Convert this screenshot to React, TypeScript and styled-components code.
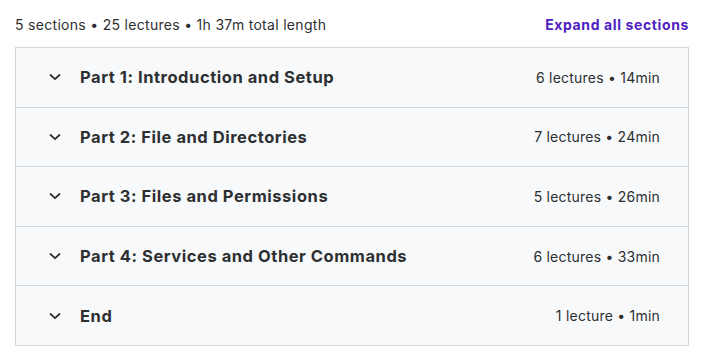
import React from "react";
import styled, { createGlobalStyle } from "styled-components";

const Global = createGlobalStyle`
  html, body { margin: 0; padding: 0; background: #ffffff; }
  body { font-family: Inter, "Noto Sans", sans-serif; color: #2d2f31; }
`;

const Page = styled.div`
  padding: 0 15px;
`;

const Header = styled.div`
  display: flex;
  align-items: center;
  justify-content: space-between;
  height: 47px;
  padding-top: 1px;
  box-sizing: border-box;
`;

const Summary = styled.span`
  font-size: 14px;
  letter-spacing: 0.3px;
  color: #2d2f31;
`;

const ExpandLink = styled.button`
  border: none;
  background: none;
  padding: 0;
  font-family: inherit;
  font-size: 14px;
  font-weight: 700;
  letter-spacing: 0.62px;
  color: #5022c3;
  cursor: pointer;
`;

const Accordion = styled.div`
  border: 1px solid #d1d7dc;
  background: #f7f9fa;
`;

const Row = styled.div`
  display: flex;
  align-items: center;
  height: 58.6px;
  padding: 0 28px 0 33px;
  & + & {
    border-top: 1px solid #d1d7dc;
  }
`;

const Chevron = styled.svg`
  width: 12px;
  height: 12px;
  flex: none;
  margin-right: 19px;
`;

const Title = styled.span`
  flex: 1;
  font-size: 16.5px;
  font-weight: 700;
  letter-spacing: 0.55px;
  color: #2d2f31;
`;

const Meta = styled.span`
  font-size: 14px;
  letter-spacing: 0.22px;
  color: #2d2f31;
`;

const sections = [
  { title: "Part 1: Introduction and Setup", meta: "6 lectures • 14min" },
  { title: "Part 2: File and Directories", meta: "7 lectures • 24min" },
  { title: "Part 3: Files and Permissions", meta: "5 lectures • 26min" },
  { title: "Part 4: Services and Other Commands", meta: "6 lectures • 33min" },
  { title: "End", meta: "1 lecture • 1min" },
];

export default function App() {
  return (
    <>
      <Global />
      <Page>
        <Header>
          <Summary>5 sections • 25 lectures • 1h 37m total length</Summary>
          <ExpandLink>Expand all sections</ExpandLink>
        </Header>
        <Accordion>
          {sections.map((s) => (
            <Row key={s.title}>
              <Chevron viewBox="0 0 12 12">
                <polyline
                  points="1.5,4 6,8.2 10.5,4"
                  fill="none"
                  stroke="#2d2f31"
                  strokeWidth="1.8"
                  strokeLinecap="round"
                  strokeLinejoin="round"
                />
              </Chevron>
              <Title>{s.title}</Title>
              <Meta>{s.meta}</Meta>
            </Row>
          ))}
        </Accordion>
      </Page>
    </>
  );
}
